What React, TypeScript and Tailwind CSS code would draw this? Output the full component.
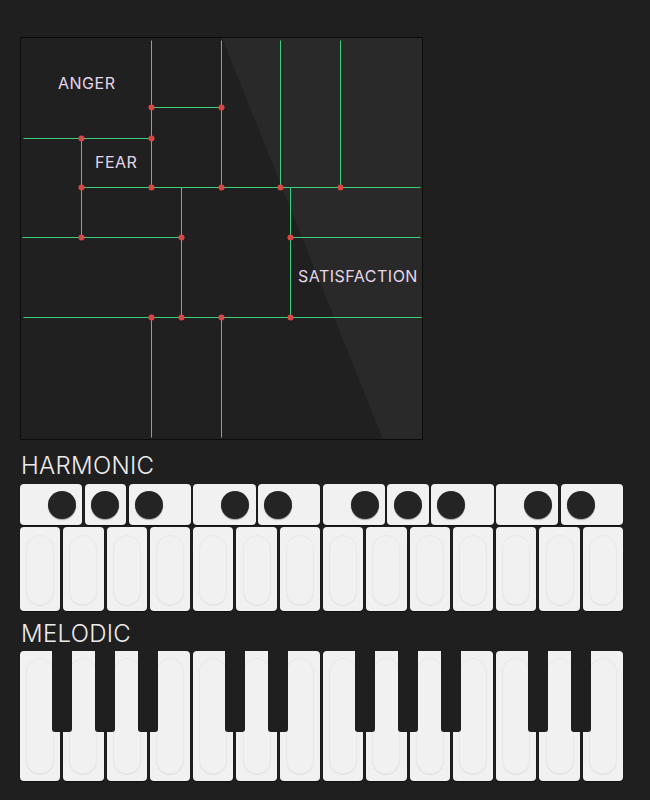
import React from 'react';

// diagram geometry in page pixels; the svg is shifted by the panel origin
const OX = 21;
const OY = 38;

const LINES: [number, number, number, number][] = [
  [151, 40, 151, 187],
  [151, 317, 151, 437],
  [221, 40, 221, 187],
  [221, 317, 221, 437],
  [151, 107, 221, 107],
  [23, 138, 151, 138],
  [81, 138, 81, 237],
  [81, 187, 420, 187],
  [280, 40, 280, 187],
  [340, 40, 340, 187],
  [181, 187, 181, 317],
  [22, 237, 181, 237],
  [290, 237, 420, 237],
  [290, 187, 290, 317],
  [23, 317, 421, 317],
];

const DOTS: [number, number][] = [
  [151, 107], [221, 107],
  [81, 138], [151, 138],
  [81, 187], [151, 187], [221, 187], [280, 187], [340, 187],
  [81, 237], [181, 237], [290, 237],
  [151, 317], [181, 317], [221, 317], [290, 317],
];

const EmotionMap: React.FC = () => (
  <div className="relative w-[403px] h-[403px] bg-[#202020] border border-[#0c0c0c] overflow-hidden">
    <svg className="absolute inset-0" width="401" height="401" viewBox="0 0 401 401">
      <polygon points="201,0 401,0 401,401 362,401" fill="#ffffff" fillOpacity="0.045" />
      <g transform={`translate(${-OX + 0.5} ${-OY + 0.5})`}>
        {LINES.map(([x1, y1, x2, y2], i) => (
          <line key={i} x1={x1} y1={y1} x2={x2} y2={y2} stroke="#3dcf7c" strokeWidth="1" />
        ))}
        {DOTS.map(([cx, cy], i) => (
          <circle key={i} cx={cx} cy={cy} r="3" fill="#d94646" />
        ))}
      </g>
    </svg>
    <span className="absolute left-[37px] top-[37px] text-[16px] leading-none text-[#e6d6ea] tracking-[0.5px]">ANGER</span>
    <span className="absolute left-[74px] top-[116px] text-[16px] leading-none text-[#e6d6ea] tracking-[0.5px]">FEAR</span>
    <span className="absolute left-[277px] top-[230px] text-[16px] leading-none text-[#e6d6ea] tracking-[0.5px]">SATISFACTION</span>
  </div>
);

// r: circle towards the right edge, c: centred (narrow segment), l: near the left edge
const SEGMENTS = ['r', 'c', 'l', 'r', 'l', 'r', 'c', 'l', 'r', 'l'];

const WhiteKey: React.FC<{ tall?: boolean }> = ({ tall }) => (
  <div className={`flex-1 rounded-[4px] bg-[#f1f1f1] shadow-[0_1px_1px_rgba(0,0,0,0.5)] flex justify-center ${tall ? 'py-[7px]' : 'pt-[8px] pb-[6px]'}`}>
    <div className="w-[28px] rounded-full border border-[#e9e9e9] shadow-[0_1px_1px_rgba(0,0,0,0.07)]" />
  </div>
);

const Harmonic: React.FC = () => (
  <div className="flex flex-col gap-[2px] w-[603px]">
    <div className="flex gap-[2.5px] h-[41px]">
      {SEGMENTS.map((s, i) => (
        <div
          key={i}
          className={`shrink-0 rounded-[4px] bg-[#f1f1f1] shadow-[0_1px_1px_rgba(0,0,0,0.5)] flex items-center ${
            s === 'c'
              ? 'w-[calc((100%-22.5px)*2/28)] justify-center'
              : 'w-[calc((100%-22.5px)*3/28)]'
          } ${s === 'r' ? 'pl-[28px]' : s === 'l' ? 'pl-[6px]' : ''}`}
        >
          <div className="w-[28px] h-[28px] rounded-full bg-[#242424] shadow-[0_1px_1px_rgba(0,0,0,0.35)]" />
        </div>
      ))}
    </div>
    <div className="flex gap-[3px] h-[84px]">
      {Array.from({ length: 14 }).map((_, i) => (
        <WhiteKey key={i} />
      ))}
    </div>
  </div>
);

const BLACK_KEYS = [
  'left-[32px]', 'left-[75px]', 'left-[118px]', 'left-[205px]', 'left-[248px]',
  'left-[335px]', 'left-[378px]', 'left-[421px]', 'left-[508px]', 'left-[551px]',
];

const Melodic: React.FC = () => (
  <div className="relative flex gap-[3px] h-[130px] w-[603px]">
    {Array.from({ length: 14 }).map((_, i) => (
      <WhiteKey key={i} tall />
    ))}
    {BLACK_KEYS.map((k) => (
      <div key={k} className={`absolute top-0 ${k} w-[20px] h-[81px] bg-[#1f1f1f] rounded-b-[3px]`} />
    ))}
  </div>
);

export default function App() {
  return (
    <div className="min-h-[800px] bg-[#1f1f1f] pl-[20px] pt-[37px] font-['Inter','Liberation_Sans',sans-serif]">
      <EmotionMap />
      <div className="mt-[14px] ml-[1px] text-[24px] leading-none font-light text-[#ececec] tracking-[0.3px]">HARMONIC</div>
      <div className="mt-[6px]">
        <Harmonic />
      </div>
      <div className="mt-[11px] ml-[1px] text-[24px] leading-none font-light text-[#ececec] tracking-[0.3px]">MELODIC</div>
      <div className="mt-[5px]">
        <Melodic />
      </div>
    </div>
  );
}
